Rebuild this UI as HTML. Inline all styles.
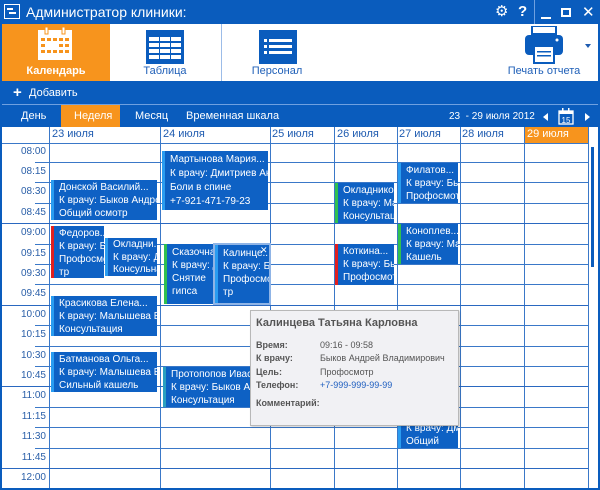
<!DOCTYPE html>
<html><head><meta charset="utf-8"><style>
*{margin:0;padding:0;box-sizing:border-box}
body{width:600px;height:490px;overflow:hidden;background:#0a5cbd;font-family:"Liberation Sans","DejaVu Sans",sans-serif;position:relative}
.a{position:absolute}
.tb{color:#fff}
.hl{position:absolute;height:1px;background:#3a78c8}
.vl{position:absolute;width:1px;background:#3a78c8}
.ev{position:absolute;background:#0e61c4;color:#fff;font-size:10px;line-height:18.5px;padding:1px 0 0 5px;overflow:hidden;white-space:nowrap;border-left:3px solid #2a9cf0}
.tl{position:absolute;left:0;width:46px;text-align:right;font-size:10px;color:#2a5fa8}
.dh{position:absolute;top:128px;font-size:11px;color:#1e5bb0}
</style></head><body>
<div class="a" style="left:4px;top:4px;width:16px;height:15px;border:1.5px solid #fff"></div>
<div class="a" style="left:7px;top:8px;width:6px;height:1.5px;background:#fff"></div>
<div class="a" style="left:9px;top:12px;width:7px;height:1.5px;background:#fff"></div>
<div class="a tb" style="left:26px;top:4px;font-size:14px">Администратор клиники:</div>
<div class="a tb" style="left:495px;top:2px;font-size:15px;font-weight:bold">⚙</div>
<div class="a tb" style="left:518px;top:3px;font-size:15px;font-weight:bold">?</div>
<div class="a" style="left:534px;top:0;width:1px;height:24px;background:#6fa0e0"></div>
<div class="a" style="left:541px;top:17px;width:10px;height:2px;background:#fff"></div>
<div class="a" style="left:561px;top:8px;width:10px;height:9px;border:2px solid #fff"></div>
<div class="a tb" style="left:582px;top:3px;font-size:15px;font-weight:bold">✕</div>
<div class="a" style="left:2px;top:24px;width:596px;height:57px;background:#fff"></div>
<div class="a" style="left:2px;top:24px;width:108px;height:57px;background:#f7941d"></div>
<svg class="a" style="left:37px;top:27px" width="36" height="34"><rect x="1" y="3" width="34" height="30" fill="#fff"/><rect x="8" y="0" width="3" height="7" fill="#fff" stroke="#f7941d"/><rect x="25" y="0" width="3" height="7" fill="#fff" stroke="#f7941d"/>
<g fill="#f7941d"><rect x="4" y="11" width="4" height="3"/><rect x="10" y="11" width="4" height="3"/><rect x="16" y="11" width="4" height="3"/><rect x="22" y="11" width="4" height="3"/><rect x="28" y="11" width="4" height="3"/><rect x="4" y="17" width="4" height="3"/><rect x="22" y="17" width="4" height="3"/><rect x="28" y="17" width="4" height="3"/><rect x="4" y="23" width="4" height="3"/><rect x="10" y="23" width="4" height="3"/><rect x="16" y="23" width="4" height="3"/><rect x="22" y="23" width="4" height="3"/><rect x="28" y="23" width="4" height="3"/></g></svg>
<div class="a" style="left:2px;top:65px;width:108px;text-align:center;font-size:11px;color:#fff;font-weight:600">Календарь</div>
<svg class="a" style="left:146px;top:30px" width="38" height="34"><rect width="38" height="34" fill="#0a5cbd"/><g fill="#fff"><rect x="3" y="7" width="10" height="4"/><rect x="14" y="7" width="10" height="4"/><rect x="25" y="7" width="10" height="4"/><rect x="3" y="13" width="10" height="4"/><rect x="14" y="13" width="10" height="4"/><rect x="25" y="13" width="10" height="4"/><rect x="3" y="19" width="10" height="4"/><rect x="14" y="19" width="10" height="4"/><rect x="25" y="19" width="10" height="4"/><rect x="3" y="25" width="10" height="4"/><rect x="14" y="25" width="10" height="4"/><rect x="25" y="25" width="10" height="4"/></g></svg>
<div class="a" style="left:110px;top:65px;width:110px;text-align:center;font-size:11px;color:#2060b8">Таблица</div>
<div class="a" style="left:221px;top:24px;width:1px;height:57px;background:#9cbce8"></div>
<svg class="a" style="left:259px;top:30px" width="38" height="34"><rect width="38" height="34" fill="#0a5cbd"/><g fill="#fff"><rect x="5" y="9" width="3" height="3"/><rect x="10" y="9" width="23" height="3"/><rect x="5" y="15" width="3" height="3"/><rect x="10" y="15" width="23" height="3"/><rect x="5" y="21" width="3" height="3"/><rect x="10" y="21" width="23" height="3"/></g></svg>
<div class="a" style="left:222px;top:65px;width:110px;text-align:center;font-size:11px;color:#2060b8">Персонал</div>
<svg class="a" style="left:524px;top:26px" width="40" height="38"><rect x="8" y="0" width="24" height="8" fill="#fff" stroke="#0a5cbd" stroke-width="2"/><rect x="1" y="9" width="38" height="20" rx="4" fill="#0a5cbd"/><circle cx="33" cy="14" r="1.5" fill="#fff"/><rect x="10" y="20" width="20" height="17" fill="#fff" stroke="#0a5cbd" stroke-width="2"/><rect x="13" y="25" width="14" height="1.5" fill="#0a5cbd"/><rect x="13" y="29" width="14" height="1.5" fill="#0a5cbd"/></svg>
<div class="a" style="left:585px;top:44px;width:0;height:0;border-left:3px solid transparent;border-right:3px solid transparent;border-top:4px solid #1e5bb0"></div>
<div class="a" style="left:498px;top:65px;width:92px;text-align:center;font-size:11px;color:#2060b8">Печать отчета</div>
<div class="a tb" style="left:13px;top:84px;font-size:15px;font-weight:bold">+</div>
<div class="a tb" style="left:29px;top:87px;font-size:11px">Добавить</div>
<div class="a" style="left:2px;top:104px;width:596px;height:1px;background:#6fa0e0"></div>
<div class="a" style="left:61px;top:105px;width:59px;height:22px;background:#f7941d"></div>
<div class="a tb" style="left:21px;top:110px;font-size:11px">День</div>
<div class="a tb" style="left:74px;top:110px;font-size:11px">Неделя</div>
<div class="a tb" style="left:135px;top:110px;font-size:11px">Месяц</div>
<div class="a tb" style="left:186px;top:110px;font-size:11px">Временная шкала</div>
<div class="a tb" style="left:449px;top:111px;font-size:10px">23&nbsp; - 29 июля 2012</div>
<div class="a" style="left:543px;top:113px;border-top:4px solid transparent;border-bottom:4px solid transparent;border-right:5px solid #fff"></div>
<svg class="a" style="left:558px;top:108px" width="16" height="17"><rect x="1" y="3" width="14" height="13" fill="none" stroke="#fff" stroke-width="1.3"/><rect x="1" y="3" width="14" height="3" fill="#fff"/><rect x="4" y="0" width="1.5" height="4" fill="#fff"/><rect x="10" y="0" width="1.5" height="4" fill="#fff"/><text x="8" y="15" font-size="8" fill="#fff" text-anchor="middle" font-family="Liberation Sans">15</text></svg>
<div class="a" style="left:585px;top:113px;border-top:4px solid transparent;border-bottom:4px solid transparent;border-left:5px solid #fff"></div>
<div class="a" style="left:2px;top:127px;width:596px;height:361px;background:#fff"></div>
<div class="a" style="left:524px;top:127px;width:64px;height:16px;background:#f7941d"></div>
<div class="hl" style="left:2px;top:143px;width:586px"></div>
<div class="dh" style="left:52px">23 июля</div>
<div class="dh" style="left:163px">24 июля</div>
<div class="dh" style="left:272px">25 июля</div>
<div class="dh" style="left:337px">26 июля</div>
<div class="dh" style="left:399px">27 июля</div>
<div class="dh" style="left:462px">28 июля</div>
<div class="dh" style="left:527px;color:#fff">29 июля</div>
<div class="vl" style="left:49px;top:127px;height:361px"></div>
<div class="vl" style="left:160px;top:127px;height:361px"></div>
<div class="vl" style="left:270px;top:127px;height:361px"></div>
<div class="vl" style="left:334px;top:127px;height:361px"></div>
<div class="vl" style="left:397px;top:127px;height:361px"></div>
<div class="vl" style="left:460px;top:127px;height:361px"></div>
<div class="vl" style="left:524px;top:127px;height:361px"></div>
<div class="vl" style="left:588px;top:127px;height:361px"></div>
<div class="a" style="left:591px;top:147px;width:3px;height:120px;background:#0a5cbd"></div>
<div id="rows"></div>
<script>
var t=["08:00","08:15","08:30","08:45","09:00","09:15","09:30","09:45","10:00","10:15","10:30","10:45","11:00","11:15","11:30","11:45","12:00"],h="";
for(var i=0;i<17;i++){var y=141.5+i*20.4;h+='<div class="tl" style="top:'+(y+4)+'px">'+t[i]+'</div>';
if(i>0)h+='<div class="hl" style="top:'+Math.round(y)+'px;left:'+(i%4==0?2:35)+'px;width:'+(i%4==0?586:553)+'px;'+(i%4==0?'background:#2a68c0':'')+'"></div>';}
document.getElementById("rows").outerHTML=h;
</script>
<div class="ev" style="left:51px;top:180px;width:106px;height:40px;line-height:13px">Донской Василий...<br>К врачу: Быков Андрей<br>Общий осмотр</div>
<div class="ev" style="left:162px;top:151px;width:106px;height:59px;line-height:14px;padding-top:2px">Мартынова Мария...<br>К врачу: Дмитриев Андр<br>Боли в спине<br>+7-921-471-79-23</div>
<div class="ev" style="left:51px;top:226px;width:53px;height:52px;line-height:13px;border-left-color:#e02020">Федоров...<br>К врачу: Бь<br>Профосмо<br>тр</div>
<div class="ev" style="left:105px;top:238px;width:52px;height:38px;line-height:12.5px">Окладни...<br>К врачу: Дı<br>Консульна</div>
<div class="ev" style="left:164px;top:244px;width:50px;height:60px;line-height:13px;border-left-color:#30c050;padding-top:2px">Сказочна...<br>К врачу: Дı<br>Снятие<br>гипса</div>
<div class="ev" style="left:215px;top:245px;width:54px;height:58px;line-height:13px;box-shadow:0 0 0 2px #8fb4e6;padding-top:2px">Калинце...<br>К врачу: Бь<br>Профосмо<br>тр</div>
<div class="a tb" style="left:260px;top:245px;font-size:9px">✕</div>
<div class="ev" style="left:51px;top:296px;width:106px;height:40px;line-height:13px">Красикова Елена...<br>К врачу: Малышева Ел<br>Консультация</div>
<div class="ev" style="left:51px;top:352px;width:106px;height:40px;line-height:13px">Батманова Ольга...<br>К врачу: Малышева Ел<br>Сильный кашель</div>
<div class="ev" style="left:163px;top:367px;width:90px;height:40px;line-height:13px;border-left-color:#2aa0c0">Протопопов Ивас...<br>К врачу: Быков Андр<br>Консультация</div>
<div class="ev" style="left:335px;top:183px;width:59px;height:40px;line-height:13px;border-left-color:#30c050">Окладнико...<br>К врачу: Ма.<br>Консультац</div>
<div class="ev" style="left:335px;top:244px;width:59px;height:41px;line-height:13px;border-left-color:#e02020">Коткина...<br>К врачу: Бык<br>Профосмот</div>
<div class="ev" style="left:398px;top:163px;width:60px;height:40px;line-height:13px">Филатов...<br>К врачу: Бык<br>Профосмот</div>
<div class="ev" style="left:398px;top:224px;width:60px;height:40px;line-height:13px;border-left-color:#30c050">Коноплев...<br>К врачу: Ма.<br>Кашель</div>
<div class="ev" style="left:398px;top:418px;width:60px;height:30px;line-height:13px;padding-top:4px">К врачу: Дмі<br>Общий</div>
<div class="a" style="left:250px;top:310px;width:209px;height:116px;background:#f1f1f4;border:1px solid #b8b8b8;box-shadow:1px 1px 2px rgba(0,0,0,.2);font-size:9px;color:#555">
<div class="a" style="left:5px;top:6px;font-size:11px;font-weight:bold">Калинцева Татьяна Карловна</div>
<div class="a" style="left:5px;top:28px;font-weight:bold;line-height:13.3px">Время:<br>К врачу:<br>Цель:<br>Телефон:</div>
<div class="a" style="left:69px;top:28px;line-height:13.3px;white-space:nowrap">09:16 - 09:58<br>Быков Андрей Владимирович<br>Профосмотр<br><span style="color:#2060c0">+7-999-999-99-99</span></div>
<div class="a" style="left:5px;top:87px;font-weight:bold">Комментарий:</div>
</div>
</body></html>
